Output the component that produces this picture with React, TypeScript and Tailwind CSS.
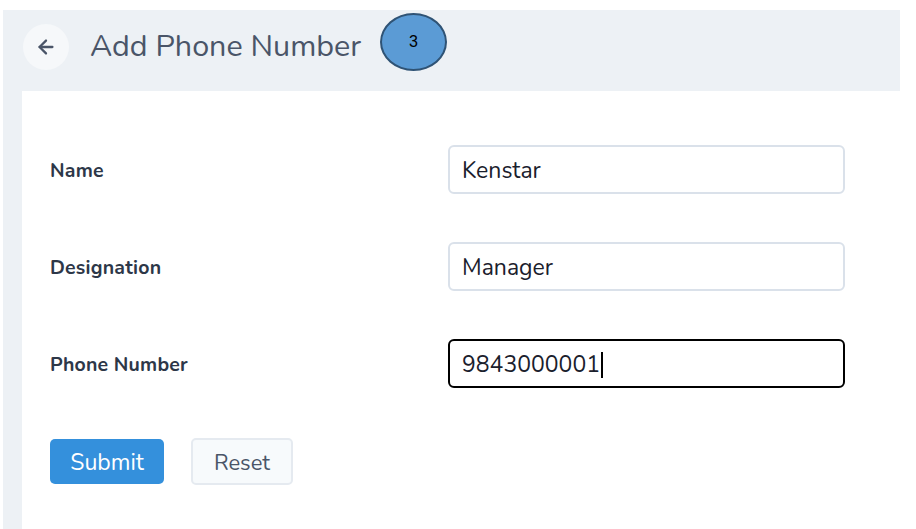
import { ArrowLeft } from 'lucide-react'

const font = { fontFamily: "'Nunito', 'Open Sans', sans-serif" }

function Field({ label, value, focused }: { label: string; value: string; focused?: boolean }) {
    return (
        <div className="flex h-[49px] items-center">
            <label className="w-[398px] pt-[3px] text-[19.5px] font-bold tracking-[0.2px] text-[#2d3748]">{label}</label>
            <div
                className={`flex h-[49px] w-[397px] items-center rounded-[6px] bg-white px-[12px] pt-[3px] text-[23px] text-[#1a202c] ${
                    focused ? 'border-2 border-black' : 'border-2 border-[#dae1ea]'
                }`}
            >
                <span>{value}</span>
                {focused && <span className="ml-[1px] h-[26px] w-[2px] bg-black" />}
            </div>
        </div>
    )
}

export default function App() {
    return (
        <div className="h-[529px] w-[916px] overflow-hidden bg-white pt-[10px] pl-[3px] pr-[16px]" style={font}>
            <div className="relative h-[519px] bg-[#edf1f5]">
                <header className="flex h-[81px] items-start gap-[21px] pt-[14px] pl-[20px]">
                    <button className="flex h-[46px] w-[46px] items-center justify-center rounded-full bg-[#f6f8fa] text-[#4a5568]">
                        <ArrowLeft size={22} strokeWidth={2.5} />
                    </button>
                    <h1 className="flex h-[44px] items-center text-[30.5px] leading-none text-[#4a5568]">Add Phone Number</h1>
                </header>

                <div
                    className="absolute top-[3px] left-[377px] flex h-[58px] w-[67px] items-start justify-center rounded-[50%] border-2 border-[#2f5375] bg-[#5b9bd5] pt-[15px] text-[16px] text-black"
                    style={{ fontFamily: "'Liberation Sans', sans-serif" }}
                >
                    3
                </div>

                <div className="ml-[19px] h-[438px] bg-white pt-[54px] pl-[28px]">
                    <div className="flex flex-col gap-[48px]">
                        <Field label="Name" value="Kenstar" />
                        <Field label="Designation" value="Manager" />
                        <Field label="Phone Number" value="9843000001" focused />
                    </div>
                    <div className="mt-[51px] flex items-start gap-[27px]">
                        <button className="h-[45px] w-[114px] rounded-[5px] bg-[#3490dc] pt-[3px] text-[23px] text-white">Submit</button>
                        <button className="-mt-[1px] h-[47px] w-[102px] rounded-[5px] border-2 border-[#e5eaf0] bg-[#f7fafc] pt-[3px] text-[22px] text-[#4a5568]">
                            Reset
                        </button>
                    </div>
                </div>
            </div>
        </div>
    )
}
